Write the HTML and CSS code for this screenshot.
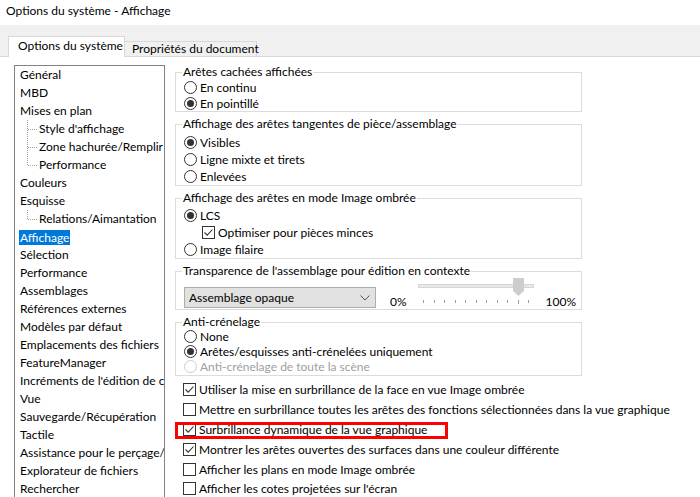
FILE: index.html
```html
<!DOCTYPE html>
<html lang="fr">
<head>
<meta charset="utf-8">
<title>Options du système - Affichage</title>
<link rel="stylesheet" href="styles.css">
</head>
<body>
<div class="window">
  <div class="titlebar">Options du système - Affichage</div>
  <div class="tabstrip">
    <div class="tab active">Options du système</div>
    <div class="tab">Propriétés du document</div>
  </div>
  <div class="content">
    <div class="tree">
      <div class="node">Général</div>
      <div class="node">MBD</div>
      <div class="node">Mises en plan</div>
      <div class="node child"><svg class="twig" width="12" height="18"><path d="M0.5 0V18M1 9.5H11"/></svg><span>Style d'affichage</span></div>
      <div class="node child"><svg class="twig" width="12" height="18"><path d="M0.5 0V18M1 9.5H11"/></svg><span>Zone hachurée/Remplir</span></div>
      <div class="node child"><svg class="twig" width="12" height="18"><path d="M0.5 0V9M1 9.5H11"/></svg><span>Performance</span></div>
      <div class="node">Couleurs</div>
      <div class="node">Esquisse</div>
      <div class="node child"><svg class="twig" width="12" height="18"><path d="M0.5 0V9M1 9.5H11"/></svg><span>Relations/Aimantation</span></div>
      <div class="node"><span class="selected">Affichage</span></div>
      <div class="node">Sélection</div>
      <div class="node">Performance</div>
      <div class="node">Assemblages</div>
      <div class="node">Références externes</div>
      <div class="node">Modèles par défaut</div>
      <div class="node">Emplacements des fichiers</div>
      <div class="node">FeatureManager</div>
      <div class="node">Incréments de l'édition de cotes</div>
      <div class="node">Vue</div>
      <div class="node">Sauvegarde/Récupération</div>
      <div class="node">Tactile</div>
      <div class="node">Assistance pour le perçage/Toolbox</div>
      <div class="node">Explorateur de fichiers</div>
      <div class="node">Rechercher</div>
    </div>

    <div class="panel">
      <fieldset class="group g1">
        <legend>Arêtes cachées affichées</legend>
        <div class="opt"><span class="radio"></span>En continu</div>
        <div class="opt"><span class="radio on"></span>En pointillé</div>
      </fieldset>

      <fieldset class="group g2">
        <legend>Affichage des arêtes tangentes de pièce/assemblage</legend>
        <div class="opt"><span class="radio on"></span>Visibles</div>
        <div class="opt"><span class="radio"></span>Ligne mixte et tirets</div>
        <div class="opt"><span class="radio"></span>Enlevées</div>
      </fieldset>

      <fieldset class="group g3">
        <legend>Affichage des arêtes en mode Image ombrée</legend>
        <div class="opt"><span class="radio on"></span>LCS</div>
        <div class="opt sub"><span class="check"><svg width="11" height="11"><path d="M1.5 5.5L4.2 8.2L9.5 2.5"/></svg></span>Optimiser pour pièces minces</div>
        <div class="opt"><span class="radio"></span>Image filaire</div>
      </fieldset>

      <fieldset class="group g4">
        <legend>Transparence de l'assemblage pour édition en contexte</legend>
        <div class="transp">
          <div class="select"><span>Assemblage opaque</span><svg width="10" height="6"><path d="M0.5 0.5L5 5L9.5 0.5"/></svg></div>
          <span class="pct0">0%</span>
          <svg class="slider" width="116" height="28">
            <rect class="track" x="0.5" y="6.5" width="115" height="3"/>
            <g class="ticks">
              <path d="M5.5 22V25M16.5 22V25M26.5 22V25M37.5 22V25M47.5 22V25M58.5 22V25M68.5 22V25M79.5 22V25M89.5 22V25M100.5 22V26M110.5 22V25"/>
            </g>
            <polygon class="thumb" points="95,0 106,0 106,13 100.5,18 95,13"/>
          </svg>
          <span class="pct100">100%</span>
        </div>
      </fieldset>

      <fieldset class="group g5">
        <legend>Anti-crénelage</legend>
        <div class="opt"><span class="radio"></span>None</div>
        <div class="opt"><span class="radio on"></span>Arêtes/esquisses anti-crénelées uniquement</div>
        <div class="opt disabled"><span class="radio"></span>Anti-crénelage de toute la scène</div>
      </fieldset>

      <div class="checks">
        <div class="crow"><span class="check"><svg width="11" height="11"><path d="M1.5 5.5L4.2 8.2L9.5 2.5"/></svg></span>Utiliser la mise en surbrillance de la face en vue Image ombrée</div>
        <div class="crow"><span class="check"></span>Mettre en surbrillance toutes les arêtes des fonctions sélectionnées dans la vue graphique</div>
        <div class="crow marked"><span class="check"><svg width="11" height="11"><path d="M1.5 5.5L4.2 8.2L9.5 2.5"/></svg></span>Surbrillance dynamique de la vue graphique<span class="annot"></span></div>
        <div class="crow"><span class="check"><svg width="11" height="11"><path d="M1.5 5.5L4.2 8.2L9.5 2.5"/></svg></span>Montrer les arêtes ouvertes des surfaces dans une couleur différente</div>
        <div class="crow"><span class="check"></span>Afficher les plans en mode Image ombrée</div>
        <div class="crow last"><span class="check"></span>Afficher les cotes projetées sur l'écran</div>
      </div>
    </div>
  </div>
</div>
</body>
</html>
```

FILE: styles.css
```css
* { box-sizing: border-box; }

html, body {
  margin: 0;
  padding: 0;
  background: #ffffff;
}

body {
  width: 700px;
  height: 497px;
  overflow: hidden;
  font-family: Lato, "Liberation Sans", sans-serif;
  font-size: 12px;
  color: #000000;
}

.window {
  display: flex;
  flex-direction: column;
  height: 497px;
  overflow: hidden;
}

.titlebar {
  height: 25px;
  padding-left: 6px;
  line-height: 21px;
  background: #ffffff;
  white-space: nowrap;
}

.tabstrip {
  height: 32px;
  background: #f0f0f0;
  border-bottom: 1px solid #d9d9d9;
  display: flex;
  align-items: flex-end;
  padding-left: 8px;
}

.tab {
  white-space: nowrap;
  background: #f0f0f0;
  border-top: 1px solid #d9d9d9;
  border-right: 1px solid #d9d9d9;
  height: 15px;
  line-height: 14px;
  width: 132px;
  padding-left: 7px;
  flex-shrink: 0;
}

.tab.active {
  background: #ffffff;
  border-left: 1px solid #d9d9d9;
  height: 21px;
  line-height: 18px;
  width: 117px;
  padding-left: 9px;
  margin-bottom: -1px;
  position: relative;
}

.content {
  display: flex;
  padding: 8px 0 0 14px;
  flex: 1;
  min-height: 0;
}

.tree {
  width: 151px;
  height: 432px;
  border: 1px solid #828282;
  border-bottom: none;
  overflow: hidden;
  white-space: nowrap;
  flex-shrink: 0;
}

.node {
  height: 18px;
  line-height: 18px;
  padding-left: 5px;
  display: flex;
  align-items: center;
}

.node.child {
  padding-left: 12px;
}

.twig {
  flex-shrink: 0;
  display: block;
}

.twig path {
  fill: none;
  stroke: #a0a0a0;
  stroke-width: 1;
  stroke-dasharray: 1 1;
}

.selected {
  display: inline-block;
  background: #0078d7;
  color: #ffffff;
  height: 15px;
  line-height: 15px;
  padding: 0 1px;
  margin-left: -1px;
}

.panel {
  margin-left: 10px;
  width: 407px;
  display: flex;
  flex-direction: column;
  gap: 5px;
}

.group {
  margin: 0;
  border: 1px solid #dcdcdc;
  padding: 0 0 0 8px;
  min-width: 0;
}

.group legend {
  padding: 0 1px;
  margin-left: -2px;
  line-height: 14px;
  white-space: nowrap;
}

.opt {
  display: flex;
  align-items: center;
  white-space: nowrap;
}

.g1 .opt { height: 16px; }
.g2 { padding-top: 3px; }
.g2 .opt { height: 17px; }
.g3 { padding-top: 2px; }
.g3 .opt { height: 17px; }
.g5 { padding-bottom: 1px; }
.g5 .opt { height: 15px; }

.radio {
  width: 13px;
  height: 13px;
  border: 1px solid #333333;
  border-radius: 50%;
  background: #ffffff;
  margin-right: 3px;
  display: flex;
  align-items: center;
  justify-content: center;
  flex-shrink: 0;
}

.radio.on::after {
  content: "";
  width: 7px;
  height: 7px;
  border-radius: 50%;
  background: #333333;
}

.opt.disabled {
  color: #a0a0a0;
}

.opt.disabled .radio {
  border-color: #cccccc;
}

.check {
  width: 13px;
  height: 13px;
  border: 1px solid #333333;
  background: #ffffff;
  margin-right: 3px;
  flex-shrink: 0;
  display: flex;
  align-items: center;
  justify-content: center;
}

.check svg {
  display: block;
}

.check path {
  fill: none;
  stroke: #333333;
  stroke-width: 1.1;
}

.opt.sub {
  padding-left: 18px;
}

.transp {
  height: 31px;
  display: flex;
  align-items: flex-end;
}

.select {
  width: 192px;
  height: 21px;
  margin-bottom: 1px;
  background: #e1e1e1;
  border: 1px solid #adadad;
  display: flex;
  align-items: center;
  justify-content: space-between;
  padding: 0 5px 0 4px;
  white-space: nowrap;
}

.select svg {
  display: block;
}

.select path {
  fill: none;
  stroke: #555555;
  stroke-width: 1;
}

.pct0 {
  line-height: 16px;
  margin-left: 14px;
  margin-bottom: -1px;
}

.slider {
  display: block;
  margin-left: 11px;
  margin-bottom: 3px;
}

.track {
  fill: #e7e7e7;
  stroke: #d6d6d6;
  stroke-width: 1;
}

.ticks path {
  fill: none;
  stroke: #a0a0a0;
  stroke-width: 1;
}

.thumb {
  fill: #cdcdcd;
}

.pct100 {
  line-height: 16px;
  margin-left: 12px;
  margin-bottom: -1px;
}

.checks {
  margin-top: -2px;
  display: flex;
  flex-direction: column;
}

.crow {
  height: 20px;
  display: flex;
  align-items: center;
  white-space: nowrap;
  position: relative;
  margin-left: 8px;
}

.crow.last {
  height: 18px;
}

.annot {
  position: absolute;
  left: -8px;
  top: 3px;
  width: 273px;
  height: 17px;
  border: 3px solid #ff0000;
}
```
